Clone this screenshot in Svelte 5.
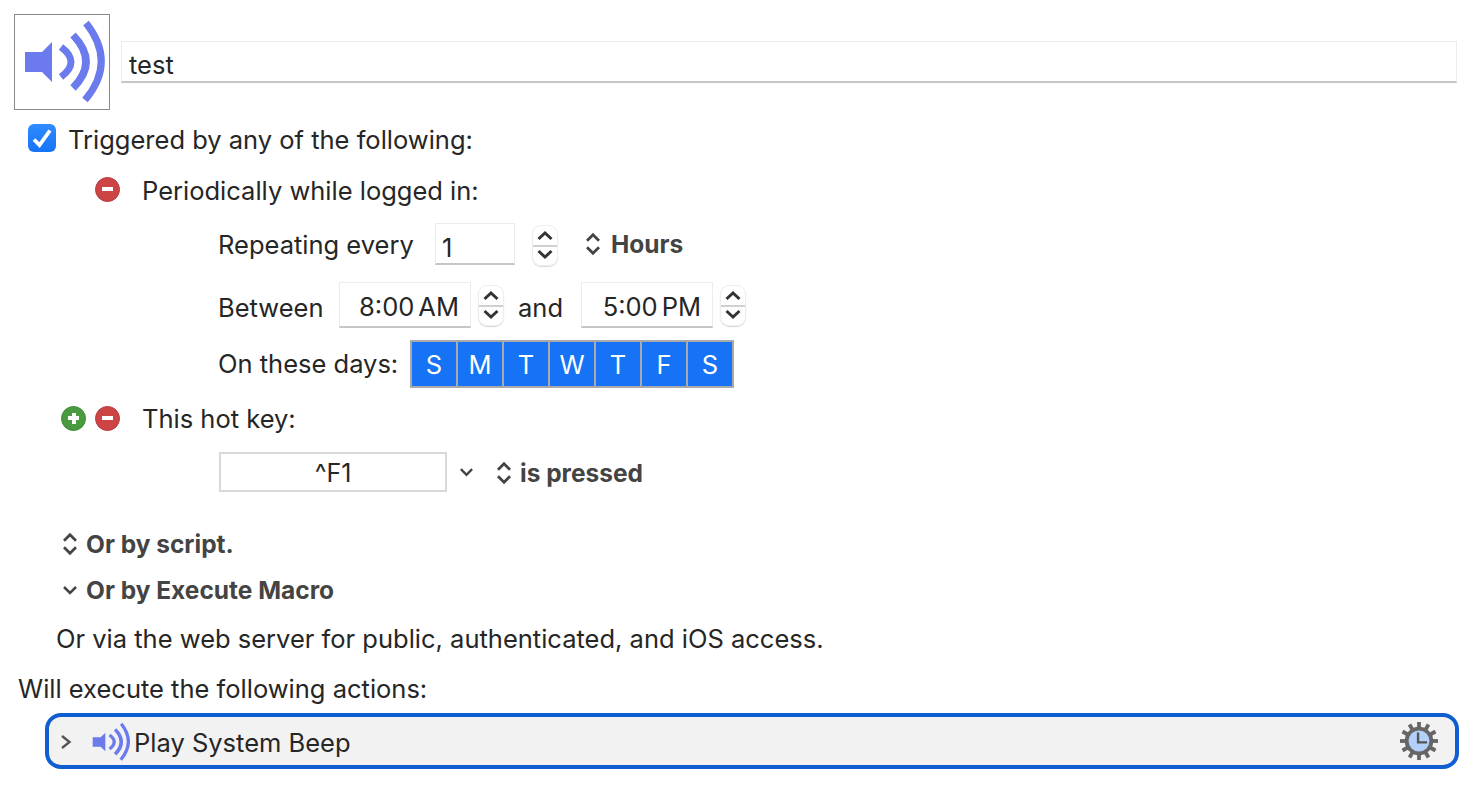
<script>
  const days = ['S', 'M', 'T', 'W', 'T', 'F', 'S'];
  const teeth = [0, 30, 60, 90, 120, 150];
</script>

{#snippet speaker(cls)}
  <svg class={cls} viewBox="0 0 94 94" aria-hidden="true">
    <path d="M10 37H27L37 27V67L27 57H10Z" fill="#6b7bee" />
    <path d="M46 32Q66 47 46 62" class="arc" stroke-width="7" />
    <path d="M58 20Q84 47 58 73" class="arc" stroke-width="7.500" />
    <path d="M71 8Q102 47 70 85" class="arc" stroke-width="7" />
  </svg>
{/snippet}

{#snippet minus()}
  <span class="round red"><span class="bar"></span></span>
{/snippet}

{#snippet updown()}
  <svg class="updown" viewBox="0 0 14 22" aria-hidden="true">
    <path d="M1.500 8L7 2.500L12.500 8M1.500 14L7 19.500L12.500 14" />
  </svg>
{/snippet}

{#snippet chevron(cls)}
  <svg class={cls} viewBox="0 0 16 10" aria-hidden="true">
    <path d="M2 2L8 8L14 2" />
  </svg>
{/snippet}

{#snippet stepper()}
  <span class="stepper">
    <svg viewBox="0 0 24 19" aria-hidden="true"><path d="M5.500 13L12 7L18.500 13" /></svg>
    <svg viewBox="0 0 24 19" aria-hidden="true"><path d="M5.500 6L12 12L18.500 6" /></svg>
  </span>
{/snippet}

<main class="page">
  <header class="top">
    <div class="iconbox">{@render speaker('bigspeaker')}</div>
    <div class="name">test</div>
  </header>

  <div class="row trigger">
    <span class="check">
      <svg viewBox="0 0 28 28" aria-hidden="true"><path d="M6 15.500L11.500 21L22 6.500" /></svg>
    </span>
    <span>Triggered by any of the following:</span>
  </div>

  <div class="row periodic">
    {@render minus()}
    <span>Periodically while logged in:</span>
  </div>

  <div class="row repeating">
    <span class="lbl-repeat">Repeating every</span>
    <span class="numfield">1</span>
    {@render stepper()}
    <span class="popup hours">{@render updown()}<b>Hours</b></span>
  </div>

  <div class="row between">
    <span class="lbl-between">Between</span>
    <span class="time">8:00<span class="ampm">AM</span></span>
    {@render stepper()}
    <span class="and">and</span>
    <span class="time">5:00<span class="ampm">PM</span></span>
    {@render stepper()}
  </div>

  <div class="row ondays">
    <span class="lbl-days">On these days:</span>
    <div class="days">
      {#each days as d}
        <span class="day">{d}</span>
      {/each}
    </div>
  </div>

  <div class="row hotkey">
    <span class="round green"><span class="bar"></span><span class="bar vert"></span></span>
    {@render minus()}
    <span>This hot key:</span>
  </div>

  <div class="row keyrow">
    <span class="keyfield">^F1</span>
    {@render chevron('keychev')}
    <span class="popup pressed">{@render updown()}<b>is pressed</b></span>
  </div>

  <div class="row script">
    <span class="popup">{@render updown()}<b>Or by script.</b></span>
  </div>

  <div class="row execmacro">
    <span class="popup">{@render chevron('macrochev')}<b>Or by Execute Macro</b></span>
  </div>

  <div class="row web">Or via the web server for public, authenticated, and iOS access.</div>
  <div class="row will">Will execute the following actions:</div>

  <div class="action">
    <svg class="disclosure" viewBox="0 0 12 16" aria-hidden="true"><path d="M2 2L9.500 8L2 14" /></svg>
    {@render speaker('smallspeaker')}
    <span class="action-name">Play System Beep</span>
    <svg class="gear" viewBox="0 0 40 40" aria-hidden="true">
      {#each teeth as t}
        <rect x="18" y="0" width="4" height="40" fill="#666" transform={`rotate(${t} 20 20)`} />
      {/each}
      <circle cx="20" cy="20" r="15" fill="#666" />
      <circle cx="20" cy="20" r="11" fill="#b3d0fb" />
      <path d="M19 11V21.500H28.500" fill="none" stroke="#555" stroke-width="2.500" />
    </svg>
  </div>
</main>

<style>
  :global(body) {
    margin: 0;
    background: #fff;
  }

  .page {
    width: 1474px;
    height: 788px;
    box-sizing: border-box;
    padding-top: 14px;
    display: flex;
    flex-direction: column;
    font-family: Inter, "Liberation Sans", sans-serif;
    font-size: 25.500px;
    color: #262626;
    overflow: hidden;
  }

  .top {
    display: flex;
    align-items: center;
    height: 96px;
    padding: 0 17px 0 14px;
    gap: 11px;
  }

  .iconbox {
    width: 96px;
    height: 96px;
    box-sizing: border-box;
    border: 1px solid #8a8a8a;
    flex: none;
  }

  .bigspeaker {
    display: block;
    width: 94px;
    height: 94px;
  }

  .arc {
    fill: none;
    stroke: #6b7bee;
  }

  .name {
    flex: 1;
    height: 42px;
    box-sizing: border-box;
    border: 1px solid #ececec;
    border-bottom: 2px solid #c6c6c6;
    padding-left: 7px;
    line-height: 45px;
    margin-top: -1px;
  }

  .row {
    display: flex;
    align-items: center;
    flex: none;
  }

  .trigger {
    height: 32px;
    margin-top: 13px;
    padding-left: 28px;
    gap: 12px;
  }

  .check {
    width: 28px;
    height: 28px;
    margin-top: -2px;
    border-radius: 6px;
    background: linear-gradient(#2f8bff, #1673f5);
    flex: none;
  }

  .check svg {
    display: block;
    width: 28px;
    height: 28px;
    fill: none;
    stroke: #fff;
    stroke-width: 3.800;
  }

  .round {
    position: relative;
    display: block;
    width: 25px;
    height: 25px;
    border-radius: 50%;
    flex: none;
  }

  .red {
    background: #cc4444;
    border: 1px solid #b83a3a;
    box-sizing: border-box;
  }

  .green {
    background: #4a9a3f;
    border: 1px solid #3f8a36;
    box-sizing: border-box;
  }

  .bar {
    position: absolute;
    left: 6px;
    top: 9.500px;
    width: 11px;
    height: 4px;
    background: #fff;
  }

  .vert {
    left: 9.500px;
    top: 6px;
    width: 4px;
    height: 11px;
  }

  .periodic {
    height: 32px;
    margin-top: 19px;
    padding-left: 95px;
    gap: 22px;
  }

  .periodic .round {
    margin-top: -2px;
  }

  .repeating {
    height: 44px;
    margin-top: 16px;
    padding-left: 219px;
  }

  .lbl-repeat {
    width: 217px;
    margin-left: -1px;
  }

  .numfield {
    width: 80px;
    height: 42px;
    box-sizing: border-box;
    border: 1px solid #ececec;
    border-bottom: 2px solid #c6c6c6;
    padding: 6px 0 0 6px;
    line-height: 35px;
  }

  .stepper {
    display: flex;
    flex-direction: column;
    width: 26px;
    height: 41px;
    box-sizing: border-box;
    border-radius: 9px;
    border: 1px solid #ededed;
    box-shadow: 0 1px 1px #d8d8d8;
    background: linear-gradient(#fff 48%, #d0d0d0 48%, #d0d0d0 53%, #fff 53%);
    flex: none;
  }

  .stepper svg {
    width: 24px;
    height: 19px;
    fill: none;
    stroke: #333;
    stroke-width: 3;
  }

  .repeating .stepper {
    margin: 2px 0 0 17px;
  }

  .popup {
    display: flex;
    align-items: center;
    gap: 8px;
    color: #444;
  }

  .popup b {
    font-weight: 700;
    font-size: 24.500px;
  }

  .hours {
    margin: 0 0 0 27px;
    gap: 10px;
  }

  .updown {
    width: 16px;
    height: 24px;
    fill: none;
    stroke: #444;
    stroke-width: 2.500;
    flex: none;
  }

  .between {
    height: 46px;
    margin-top: 16px;
    padding-left: 219px;
  }

  .lbl-between {
    width: 121px;
    margin-left: -1px;
    padding-top: 5px;
  }

  .time {
    width: 132px;
    height: 46px;
    box-sizing: border-box;
    border: 1px solid #ececec;
    border-bottom: 2px solid #c6c6c6;
    display: flex;
    justify-content: flex-end;
    gap: 4px;
    padding-right: 11px;
    line-height: 48px;
  }

  .between .stepper {
    margin: 1px 0 0 7px;
  }

  .and {
    width: 77px;
    padding: 5px 0 0 14px;
    box-sizing: border-box;
  }

  .ondays {
    height: 48px;
    margin-top: 12px;
    padding-left: 219px;
  }

  .lbl-days {
    width: 192px;
    margin-left: -1px;
    padding-bottom: 2px;
  }

  .days {
    display: flex;
    border: 2px solid #aaa;
    background: #aaa;
    gap: 2px;
  }

  .day {
    width: 44px;
    height: 44px;
    background: #1673f5;
    color: #fff;
    text-align: center;
    line-height: 46px;
  }

  .hotkey {
    height: 32px;
    margin-top: 14px;
    padding-left: 61px;
    gap: 9px;
  }

  .hotkey > span:last-child {
    margin-left: 13px;
  }

  .keyrow {
    height: 40px;
    margin-top: 18px;
    padding-left: 219px;
  }

  .keyfield {
    width: 228px;
    height: 40px;
    box-sizing: border-box;
    border: 2px solid #d9d9d9;
    text-align: center;
    font-size: 25px;
    line-height: 38px;
  }

  .keychev {
    width: 15px;
    height: 10px;
    margin-left: 12px;
    fill: none;
    stroke: #444;
    stroke-width: 2.500;
  }

  .pressed {
    margin-left: 22px;
    padding-top: 1px;
  }

  .script {
    height: 32px;
    margin-top: 36px;
    padding-left: 62px;
  }

  .execmacro {
    height: 32px;
    margin-top: 14px;
    padding-left: 62px;
  }

  .macrochev {
    width: 16px;
    height: 10px;
    fill: none;
    stroke: #444;
    stroke-width: 2.500;
  }

  .web {
    height: 32px;
    margin-top: 16px;
    padding-left: 56px;
  }

  .will {
    height: 32px;
    margin-top: 18px;
    padding-left: 18px;
  }

  .action {
    display: flex;
    align-items: center;
    width: 1414px;
    height: 56px;
    box-sizing: border-box;
    margin: 9px 0 0 45px;
    border: 4px solid #0f5fd2;
    border-radius: 16px;
    background: #f2f2f2;
    padding: 0 17px 0 11px;
    flex: none;
  }

  .disclosure {
    width: 12px;
    height: 16px;
    margin-top: 2px;
    fill: none;
    stroke: #555;
    stroke-width: 2.400;
    flex: none;
  }

  .smallspeaker {
    width: 44px;
    height: 44px;
    margin: 2px 0 0 16px;
    flex: none;
  }

  .action-name {
    flex: 1;
    margin-left: 2px;
    padding-top: 2px;
  }

  .gear {
    width: 38px;
    height: 38px;
    flex: none;
  }
</style>
